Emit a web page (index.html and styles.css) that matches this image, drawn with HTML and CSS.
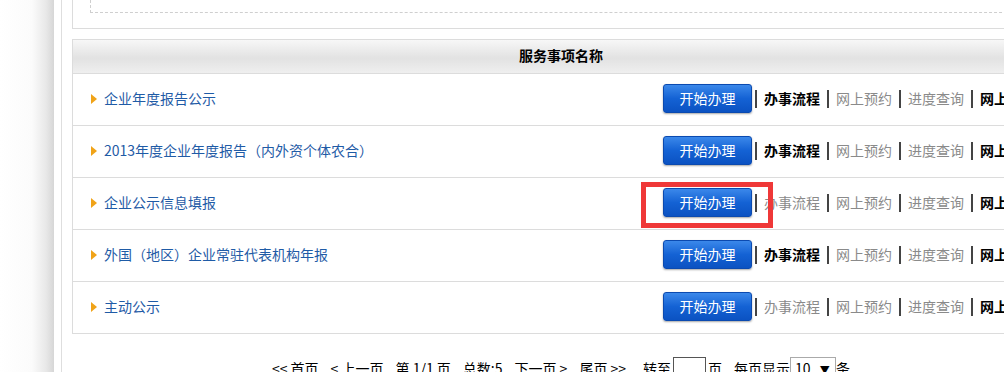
FILE: index.html
```
<!DOCTYPE html>
<html lang="zh-CN">
  <head>
    <meta charset="UTF-8" />
    <title>服务事项</title>
    <link rel="stylesheet" href="styles.css">
  </head>
  <body>
    <div class="shade"></div>
    <div class="page">
      <div class="content">
        <div class="top-box">
          <div class="dash-box"></div>
        </div>

        <div class="service-table">
          <div class="head">服务事项名称</div>

          <div class="row">
            <div class="name"><span class="arrow"></span><a href="#">企业年度报告公示</a></div>
            <div class="actions">
              <button class="start">开始办理</button>
              <span class="sep first"></span><span class="act on">办事流程</span>
              <span class="sep"></span><span class="act">网上预约</span>
              <span class="sep"></span><span class="act">进度查询</span>
              <span class="sep"></span><span class="act on">网上办理</span>
            </div>
          </div>

          <div class="row">
            <div class="name"><span class="arrow"></span><a href="#">2013年度企业年度报告（内外资个体农合）</a></div>
            <div class="actions">
              <button class="start">开始办理</button>
              <span class="sep first"></span><span class="act on">办事流程</span>
              <span class="sep"></span><span class="act">网上预约</span>
              <span class="sep"></span><span class="act">进度查询</span>
              <span class="sep"></span><span class="act on">网上办理</span>
            </div>
          </div>

          <div class="row">
            <div class="name"><span class="arrow"></span><a href="#">企业公示信息填报</a></div>
            <div class="actions">
              <button class="start">开始办理</button>
              <span class="sep first"></span><span class="act">办事流程</span>
              <span class="sep"></span><span class="act">网上预约</span>
              <span class="sep"></span><span class="act">进度查询</span>
              <span class="sep"></span><span class="act on">网上办理</span>
            </div>
            <div class="highlight"></div>
          </div>

          <div class="row">
            <div class="name"><span class="arrow"></span><a href="#">外国（地区）企业常驻代表机构年报</a></div>
            <div class="actions">
              <button class="start">开始办理</button>
              <span class="sep first"></span><span class="act on">办事流程</span>
              <span class="sep"></span><span class="act">网上预约</span>
              <span class="sep"></span><span class="act">进度查询</span>
              <span class="sep"></span><span class="act on">网上办理</span>
            </div>
          </div>

          <div class="row">
            <div class="name"><span class="arrow"></span><a href="#">主动公示</a></div>
            <div class="actions">
              <button class="start">开始办理</button>
              <span class="sep first"></span><span class="act">办事流程</span>
              <span class="sep"></span><span class="act">网上预约</span>
              <span class="sep"></span><span class="act">进度查询</span>
              <span class="sep"></span><span class="act on">网上办理</span>
            </div>
          </div>
        </div>

        <div class="pager">
          <span>&lt;&lt; 首页</span>
          <span>&lt; 上一页</span>
          <span>第 1/1 页</span>
          <span>总数:5</span>
          <span>下一页 &gt;</span>
          <span>尾页 &gt;&gt;</span>
          <span class="wide">转至<span class="goto"></span>页</span>
          <span>每页显示<span class="size">10 <span class="caret">▼</span></span>条</span>
        </div>
      </div>
    </div>
  </body>
</html>
```

FILE: styles.css
```
* {
  margin: 0;
  padding: 0;
  box-sizing: border-box;
}
html,
body {
  height: 100%;
  overflow: hidden;
}
body {
  display: flex;
  background: #fff;
  font-family: "Noto Sans CJK SC", "Liberation Sans", sans-serif;
  font-size: 14px;
  color: #000;
}
.shade {
  flex: 0 0 54px;
  background: linear-gradient(to right, #fff 0, #fbfbfb 32px, #e8e8e8 46px, #d6d6d6 54px);
}
.page {
  flex: 1;
  padding-left: 7px;
  min-width: 0;
}
.content {
  height: 100%;
  border-left: 1px solid #dedede;
  padding-left: 10px;
  width: 1000px;
}
.top-box {
  width: 978px;
  border: 1px solid #dcdcdc;
  border-top: none;
  padding: 0 17px 15px;
}
.dash-box {
  height: 13px;
  border: 1px dashed #cfcfcf;
  border-top: none;
}
.service-table {
  width: 978px;
  margin-top: 10px;
  border: 1px solid #dcdcdc;
}
.head {
  height: 34px;
  line-height: 31px;
  text-align: center;
  font-weight: bold;
  border-bottom: 1px solid #dcdcdc;
  background: linear-gradient(#f7f7f7, #e2e2e2 55%, #efefef);
}
.row {
  position: relative;
  display: flex;
  align-items: center;
  height: 52px;
  padding-bottom: 2px;
  border-bottom: 1px solid #dcdcdc;
}
.row:last-child {
  border-bottom: none;
  height: 51px;
}
.name {
  flex: 0 0 590px;
  display: flex;
  align-items: center;
  padding-left: 18px;
}
.name a {
  color: #1f5ba6;
  text-decoration: none;
  line-height: 18px;
  padding-bottom: 1px;
}
.arrow {
  width: 0;
  height: 0;
  margin-right: 7px;
  border-top: 5px solid transparent;
  border-bottom: 5px solid transparent;
  border-left: 6px solid #f0a318;
}
.actions {
  display: flex;
  align-items: center;
  white-space: nowrap;
}
.start {
  width: 89px;
  height: 29px;
  border: 1px solid #0b4ab0;
  border-radius: 3px;
  background: linear-gradient(#3b88ea, #1462d4 50%, #0b52c2);
  box-shadow: 0 1px 2px rgba(0, 0, 0, 0.35);
  color: #fff;
  font-family: inherit;
  font-size: 14px;
  line-height: 25px;
}
.sep {
  display: inline-block;
  width: 2px;
  height: 18px;
  background: #444;
  margin: 0 7px;
}
.sep.first {
  margin-left: 3px;
}
.act {
  color: #8a8a8a;
  line-height: 18px;
  padding-bottom: 1px;
}
.act.on {
  color: #000;
  font-weight: bold;
}
.highlight {
  position: absolute;
  left: 568px;
  top: 4px;
  width: 132px;
  height: 46px;
  border: 5px solid #ef3838;
}
.pager {
  width: 978px;
  margin-top: 23px;
  display: flex;
  justify-content: center;
  gap: 12px;
  line-height: 22px;
  white-space: nowrap;
}
.pager .wide {
  margin-left: 5px;
}
.goto {
  display: inline-block;
  width: 33px;
  height: 22px;
  border: 1px solid #555;
  margin: 0 2px;
  vertical-align: top;
}
.size {
  display: inline-block;
  width: 46px;
  height: 22px;
  border: 1px solid #aaa;
  padding-left: 4px;
  text-align: left;
  vertical-align: top;
  line-height: 20px;
}
.caret {
  font-size: 10px;
  margin-left: 6px;
}
```
